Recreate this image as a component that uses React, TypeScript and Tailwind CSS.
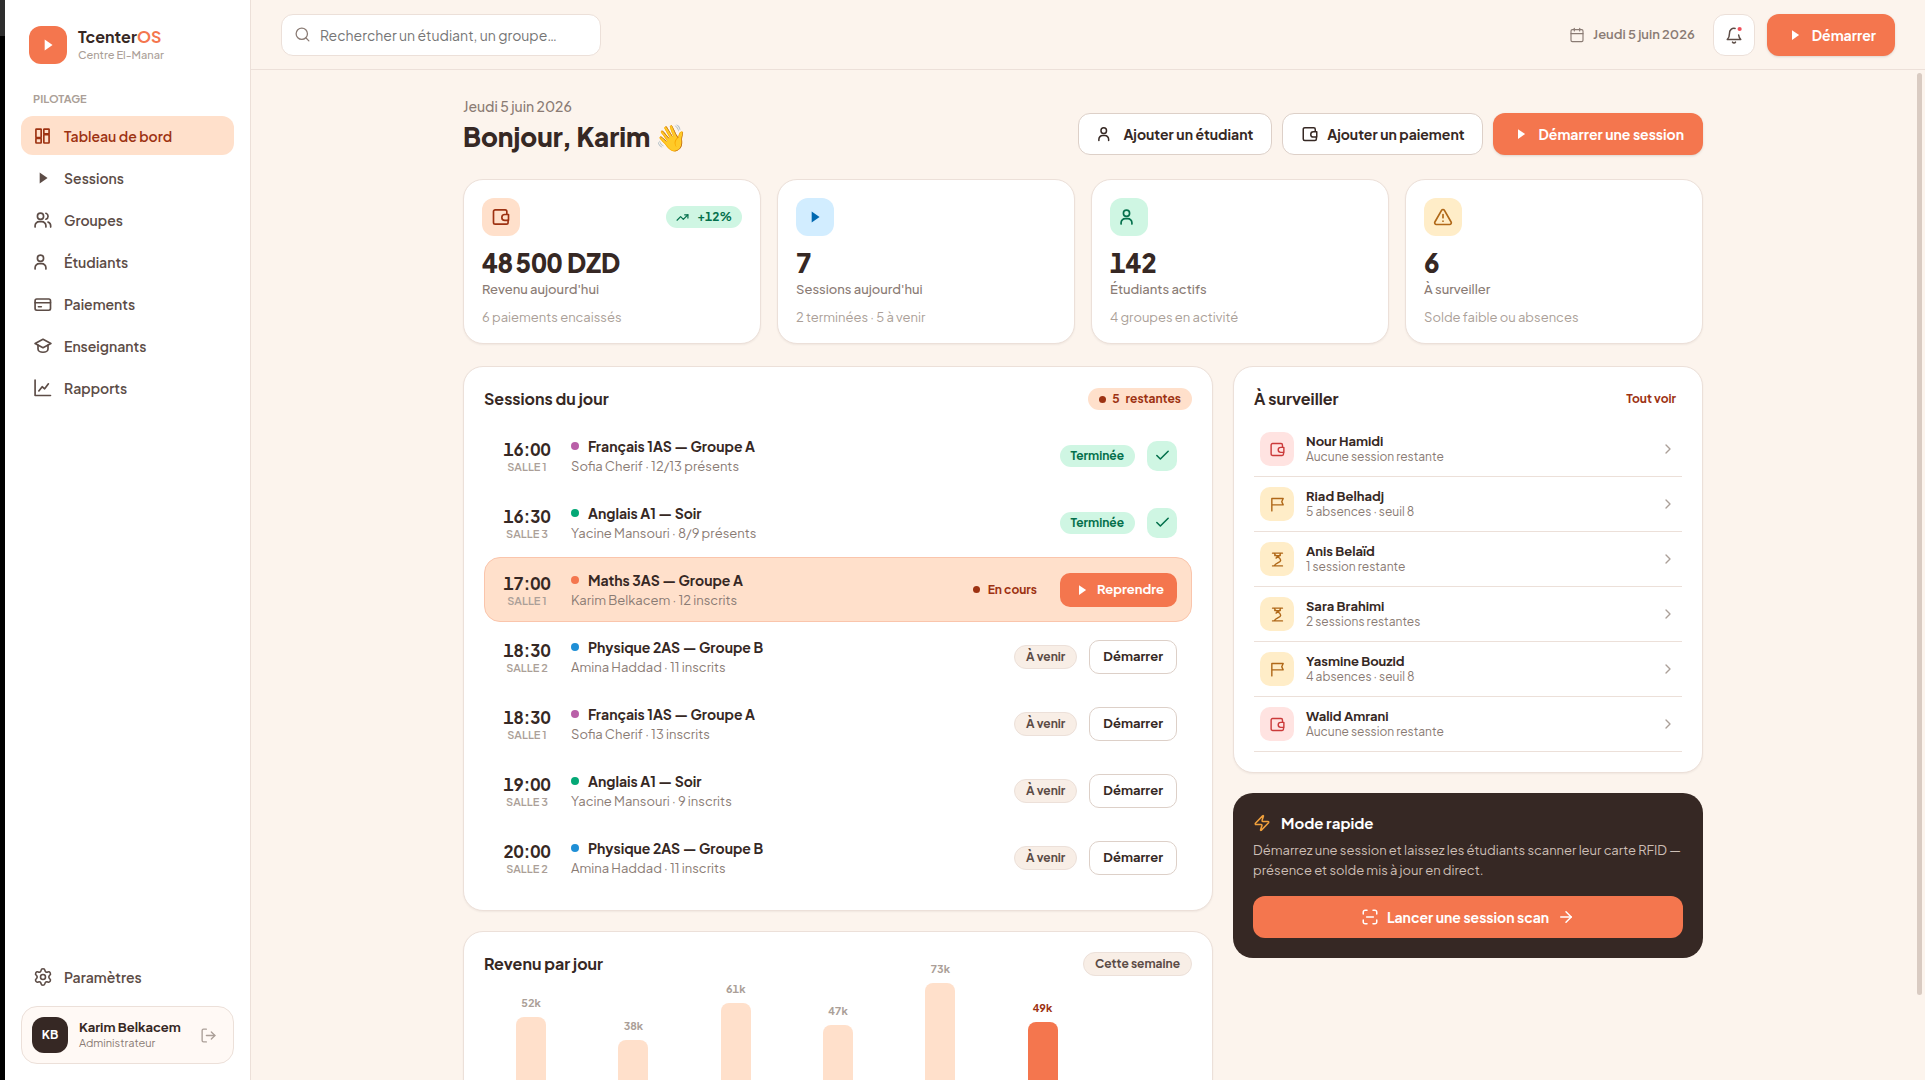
import type { ReactNode } from "react";
import {
  ArrowRight,
  Calendar,
  Check,
  ChevronRight,
  LogOut,
  Search,
  Settings,
  TrendingUp,
  TriangleAlert,
  Zap,
} from "lucide-react";

type IconName =
  | "dashboard"
  | "play"
  | "users"
  | "user"
  | "card"
  | "school"
  | "chart"
  | "wallet"
  | "flag"
  | "hourglass"
  | "bell"
  | "scan";

const shapes: Record<IconName, ReactNode> = {
  dashboard: (
    <>
      <rect x="3.5" y="3.8" width="6.3" height="10" rx="0.5" />
      <rect x="3.5" y="14.8" width="6.3" height="5.6" rx="0.5" />
      <rect x="13" y="3.8" width="6.3" height="5.6" rx="0.5" />
      <rect x="13" y="10.4" width="6.3" height="10" rx="0.5" />
    </>
  ),
  play: <path d="M8 5.5 17.5 12 8 18.5Z" fill="currentColor" stroke="none" />,
  users: (
    <>
      <circle cx="9" cy="7.5" r="3.7" />
      <path d="M2.5 20.5v-1.5a5 5 0 0 1 5-5h3a5 5 0 0 1 5 5v1.5" />
      <path d="M15.5 3.9a3.8 3.8 0 0 1 0 7.2" />
      <path d="M18 14.5c2 .8 3.2 2.5 3.2 4.5v1.5" />
    </>
  ),
  user: (
    <>
      <circle cx="9" cy="7.5" r="3.7" />
      <path d="M2.5 20.5v-1.5a5 5 0 0 1 5-5h3a5 5 0 0 1 5 5v1.5" />
    </>
  ),
  card: (
    <>
      <rect x="2.5" y="6" width="18.5" height="13.5" rx="2" />
      <path d="M2.5 10.5H21M6.5 15.3h3.5" />
    </>
  ),
  school: (
    <>
      <path d="M12 4 2.5 9 12 14l9.5-5Z" />
      <path d="M6 11v4.5c0 2.2 2.7 4 6 4s6-1.8 6-4V11" />
    </>
  ),
  chart: (
    <>
      <path d="M2.5 2.5v18.5h18.5" />
      <path d="m7 15.5 4-5 3 2.5 4.5-6" />
    </>
  ),
  wallet: (
    <>
      <path d="M19 8V5.5a2 2 0 0 0-2-2H5a2 2 0 0 0-2 2v13a2 2 0 0 0 2 2h13.5a2 2 0 0 0 2-2V16" />
      <path d="M21 9h-4.5a3.5 3.5 0 0 0 0 7H21Z" />
    </>
  ),
  flag: <path d="M4 21V3.5h16l-2 4.5 2 4.5H4" />,
  hourglass: (
    <path d="M5 3h14M5 21h14M7.5 3c0 4.500 9 5.500 9 10 0 3.500-8 4-9 8M16.500 3c0 3.500-4 5-6.500 7M8 6.500h8" />
  ),
  bell: (
    <>
      <path d="M13.5 3.2A6 6 0 0 0 6 9.5c0 4-1 6.500-3 8.500h18c-1.500-1.500-2.500-3.500-2.800-6" />
      <path d="M10 21.5a2.300 2.300 0 0 0 4 0" />
      <circle cx="19.5" cy="4" r="2.8" fill="#f04e5a" stroke="none" />
    </>
  ),
  scan: (
    <path d="M3 8V5.5A2.5 2.5 0 0 1 5.5 3H8M16 3h2.5A2.5 2.5 0 0 1 21 5.5V8M21 16v2.5a2.500 2.500 0 0 1-2.500 2.500H16M8 21H5.500A2.500 2.500 0 0 1 3 18.500V16M7.500 12h9" />
  ),
};

function Icon({ name, size = 20 }: { name: IconName; size?: number }) {
  return (
    <svg
      width={size}
      height={size}
      viewBox="0 0 24 24"
      fill="none"
      stroke="currentColor"
      strokeWidth={2}
      strokeLinecap="round"
      strokeLinejoin="round"
      className="shrink-0"
      aria-hidden="true"
    >
      {shapes[name]}
    </svg>
  );
}

const nav: { label: string; icon: IconName }[] = [
  { label: "Tableau de bord", icon: "dashboard" },
  { label: "Sessions", icon: "play" },
  { label: "Groupes", icon: "users" },
  { label: "Étudiants", icon: "user" },
  { label: "Paiements", icon: "card" },
  { label: "Enseignants", icon: "school" },
  { label: "Rapports", icon: "chart" },
];

const stats = [
  {
    icon: <Icon name="wallet" />,
    tone: "bg-[#ffe0cb] text-[#9d3212]",
    value: "48\u202f500 DZD",
    label: "Revenu aujourd'hui",
    sub: "6 paiements encaissés",
    trend: "+12%",
  },
  {
    icon: <Icon name="play" />,
    tone: "bg-[#d2edff] text-[#0068b0]",
    value: "7",
    label: "Sessions aujourd'hui",
    sub: "2 terminées · 5 à venir",
  },
  {
    icon: <Icon name="user" />,
    tone: "bg-[#cff6e3] text-[#04704c]",
    value: "142",
    label: "Étudiants actifs",
    sub: "4 groupes en activité",
  },
  {
    icon: <TriangleAlert size={20} strokeWidth={2} />,
    tone: "bg-[#ffedc8] text-[#b06818]",
    value: "6",
    label: "À surveiller",
    sub: "Solde faible ou absences",
  },
];

type Session = {
  time: string;
  room: string;
  name: string;
  meta: string;
  dot: string;
  state: "done" | "live" | "next";
};

const sessions: Session[] = [
  { time: "16:00", room: "SALLE 1", name: "Français 1AS — Groupe A", meta: "Sofia Cherif · 12/13 présents", dot: "bg-[#b95fa8]", state: "done" },
  { time: "16:30", room: "SALLE 3", name: "Anglais A1 — Soir", meta: "Yacine Mansouri · 8/9 présents", dot: "bg-[#04a876]", state: "done" },
  { time: "17:00", room: "SALLE 1", name: "Maths 3AS — Groupe A", meta: "Karim Belkacem · 12 inscrits", dot: "bg-[#f4764e]", state: "live" },
  { time: "18:30", room: "SALLE 2", name: "Physique 2AS — Groupe B", meta: "Amina Haddad · 11 inscrits", dot: "bg-[#1f8fd6]", state: "next" },
  { time: "18:30", room: "SALLE 1", name: "Français 1AS — Groupe A", meta: "Sofia Cherif · 13 inscrits", dot: "bg-[#b95fa8]", state: "next" },
  { time: "19:00", room: "SALLE 3", name: "Anglais A1 — Soir", meta: "Yacine Mansouri · 9 inscrits", dot: "bg-[#04a876]", state: "next" },
  { time: "20:00", room: "SALLE 2", name: "Physique 2AS — Groupe B", meta: "Amina Haddad · 11 inscrits", dot: "bg-[#1f8fd6]", state: "next" },
];

const RED = "bg-[#ffe3e1] text-[#cb3a3a]";
const AMBER = "bg-[#ffedc8] text-[#b06818]";

const alerts: { name: string; note: string; icon: IconName; tone: string }[] = [
  { name: "Nour Hamidi", note: "Aucune session restante", icon: "wallet", tone: RED },
  { name: "Riad Belhadj", note: "5 absences · seuil 8", icon: "flag", tone: AMBER },
  { name: "Anis Belaïd", note: "1 session restante", icon: "hourglass", tone: AMBER },
  { name: "Sara Brahimi", note: "2 sessions restantes", icon: "hourglass", tone: AMBER },
  { name: "Yasmine Bouzid", note: "4 absences · seuil 8", icon: "flag", tone: AMBER },
  { name: "Walid Amrani", note: "Aucune session restante", icon: "wallet", tone: RED },
];

const revenue = [52, 38, 61, 47, 73, 49, 0];
const today = 5;

const primaryBtn =
  "flex h-[42px] items-center gap-2 rounded-xl bg-[#f4764e] px-[19px] text-sm font-bold text-white shadow-sm hover:bg-[#e8663d]";
const outlineBtn =
  "flex h-[42px] items-center gap-2 rounded-xl border border-[#ddd0c8] bg-white px-[18px] text-sm font-bold hover:bg-[#fff9f5]";
const card = "rounded-[20px] border border-[#ece0d9] bg-white shadow-[0_1px_2px_rgba(54,40,36,0.06)]";
const neutralBadge =
  "rounded-full border border-[#ece0d9] bg-[#f8eee6] px-[11px] text-xs leading-[22px] font-bold text-[#5c4c46]";

function Sidebar() {
  return (
    <aside className="flex w-[246px] shrink-0 flex-col border-r border-[#ece0d9] bg-white p-4">
      <div className="flex items-center gap-[11px] px-2 pt-[10px]">
        <div className="flex size-[38px] items-center justify-center rounded-xl bg-[#f4764e] text-white">
          <Icon name="play" />
        </div>
        <div>
          <div className="text-base leading-5 font-bold">
            Tcenter<span className="text-[#f4764e]">OS</span>
          </div>
          <div className="text-[11px] leading-4 font-medium text-[#ab9f98]">Centre El-Manar</div>
        </div>
      </div>

      <div className="mt-7 px-3 text-[11px] leading-[14px] font-bold text-[#ab9f98]">PILOTAGE</div>
      <nav className="mt-[10px] flex flex-col gap-[3px]">
        {nav.map((n, i) => (
          <a
            key={n.label}
            href="#"
            className={`flex h-[39px] items-center gap-[11px] rounded-xl px-3 text-sm font-semibold ${
              i === 0 ? "bg-[#ffe0cb] text-[#9d3212]" : "text-[#5c4c46] hover:bg-[#fcf4ed]"
            }`}
          >
            <Icon name={n.icon} />
            {n.label}
          </a>
        ))}
      </nav>

      <a
        href="#"
        className="mt-auto flex h-[39px] items-center gap-[11px] rounded-xl px-3 text-sm font-semibold text-[#5c4c46] hover:bg-[#fcf4ed]"
      >
        <Settings size={20} strokeWidth={1.9} />
        Paramètres
      </a>
      <div className="mt-[10px] flex items-center gap-[11px] rounded-2xl border border-[#ece0d9] bg-[#fff9f5] p-[10px]">
        <div className="flex size-9 items-center justify-center rounded-xl bg-[#362824] text-xs font-bold text-white">KB</div>
        <div className="min-w-0 flex-1">
          <div className="text-[13px] leading-4 font-bold whitespace-nowrap">Karim Belkacem</div>
          <div className="text-[11px] leading-4 text-[#8a7b74]">Administrateur</div>
        </div>
        <button aria-label="Se déconnecter" className="px-[6px] text-[#ab9f98]">
          <LogOut size={17} strokeWidth={1.9} />
        </button>
      </div>
    </aside>
  );
}

function TopBar() {
  return (
    <header className="flex h-[70px] shrink-0 items-center justify-between border-b border-[#ece0d9] px-[30px]">
      <label className="flex h-[42px] w-[320px] items-center gap-[9px] rounded-xl border border-[#ece0d9] bg-white px-3">
        <Search size={17} strokeWidth={1.8} className="text-[#8a7b74]" />
        <input
          type="search"
          aria-label="Rechercher"
          placeholder="Rechercher un étudiant, un groupe…"
          className="min-w-0 flex-1 bg-transparent text-sm outline-none placeholder:text-[#757575]"
        />
      </label>
      <div className="flex items-center gap-3">
        <div className="flex items-center gap-2 pr-[6px] text-[13px] font-semibold text-[#8a7b74]">
          <Calendar size={16} strokeWidth={1.7} />
          Jeudi 5 juin 2026
        </div>
        <button
          aria-label="Notifications"
          className="flex size-[42px] items-center justify-center rounded-xl border border-[#ece0d9] bg-white text-[#5c4c46]"
        >
          <Icon name="bell" size={18} />
        </button>
        <button className={primaryBtn}>
          <Icon name="play" size={18} />
          Démarrer
        </button>
      </div>
    </header>
  );
}

function SessionRow({ s }: { s: Session }) {
  const live = s.state === "live";
  return (
    <li
      className={`flex h-[65px] items-center gap-4 rounded-2xl border px-[14px] ${
        live ? "border-[#fac5ac] bg-[#ffe0cb]" : "border-transparent"
      }`}
    >
      <div className="w-14 text-center">
        <div className="text-[17px] leading-[22px] font-bold tabular-nums">{s.time}</div>
        <div className="text-[11px] leading-[14px] font-semibold text-[#ab9f98]">{s.room}</div>
      </div>
      <div className="min-w-0 flex-1">
        <div className="flex items-center gap-[9px] text-sm leading-5 font-bold">
          <span className={`size-2 rounded-full ${s.dot}`} />
          {s.name}
        </div>
        <div className="text-[13px] leading-5 text-[#8a7b74]">{s.meta}</div>
      </div>
      <div className="flex items-center gap-3">
        {s.state === "done" && (
          <>
            <span className="rounded-full bg-[#cff6e3] px-[11px] text-xs leading-[22px] font-bold text-[#04704c]">Terminée</span>
            <span className="flex size-[30px] items-center justify-center rounded-[10px] bg-[#cff6e3] text-[#04704c]">
              <Check size={17} strokeWidth={2.2} />
            </span>
          </>
        )}
        {live && (
          <>
            <span className="flex items-center gap-2 px-[11px] text-xs font-bold text-[#9d3212]">
              <span className="size-[7px] rounded-full bg-[#9d3212]" />
              En cours
            </span>
            <button className="flex h-[34px] items-center gap-[6px] rounded-[10px] bg-[#f4764e] px-[13px] text-[13px] font-bold text-white">
              <Icon name="play" size={18} />
              Reprendre
            </button>
          </>
        )}
        {s.state === "next" && (
          <>
            <span className={neutralBadge}>À venir</span>
            <button className="h-[34px] rounded-[10px] border border-[#ddd0c8] bg-white px-[13px] text-[13px] font-bold">
              Démarrer
            </button>
          </>
        )}
      </div>
    </li>
  );
}

function RevenueCard() {
  return (
    <section className={`${card} p-5`}>
      <div className="flex h-6 items-center justify-between">
        <h2 className="text-base font-bold">Revenu par jour</h2>
        <span className={neutralBadge}>Cette semaine</span>
      </div>
      {/* the tallest bar's label is allowed to rise next to the heading */}
      <div className="mt-4 flex h-[109px] items-end gap-2">
        {revenue.map((v, i) => (
          <div key={i} className="flex flex-1 flex-col items-center gap-[6px]">
            {v > 0 && (
              <>
                <span
                  className={`text-[11px] leading-4 font-bold tabular-nums ${i === today ? "text-[#9d3212]" : "text-[#ab9f98]"}`}
                >
                  {v}k
                </span>
                <div
                  className={`w-[30px] rounded-t-lg ${i === today ? "bg-[#f4764e]" : "bg-[#ffe0cb]"}`}
                  style={{ height: Math.round(v * 1.61) }}
                />
              </>
            )}
          </div>
        ))}
      </div>
    </section>
  );
}

export default function App() {
  return (
    <div className="flex h-screen overflow-hidden bg-[#fcf4ed] font-['Plus_Jakarta_Sans',Inter,sans-serif] text-[#362824]">
      <div className="w-[5px] shrink-0 bg-black">
        <div className="h-9 bg-[#2e2e2e]" />
      </div>
      <Sidebar />
      <div className="relative flex min-w-0 flex-1 flex-col">
        <TopBar />
        <main className="flex-1 overflow-y-auto pr-[10px] [scrollbar-width:none]">
          <div className="mx-auto max-w-[1240px] pt-[25px] pb-10">
            <div className="flex items-end justify-between">
              <div>
                <p className="text-sm leading-[22px] font-medium text-[#8a7b74]">Jeudi 5 juin 2026</p>
                <h1 className="text-[26px] leading-10 font-extrabold">Bonjour, Karim 👋</h1>
              </div>
              <div className="flex gap-[10px] pb-[2px]">
                <button className={outlineBtn}>
                  <Icon name="user" size={18} />
                  Ajouter un étudiant
                </button>
                <button className={outlineBtn}>
                  <Icon name="wallet" size={18} />
                  Ajouter un paiement
                </button>
                <button className={primaryBtn}>
                  <Icon name="play" size={18} />
                  Démarrer une session
                </button>
              </div>
            </div>

            <div className="mt-[22px] grid grid-cols-4 gap-4">
              {stats.map((s) => (
                <section key={s.label} className={`${card} px-[18px] pt-[18px] pb-4`}>
                  <div className="flex items-center justify-between">
                    <div className={`flex size-[38px] items-center justify-center rounded-xl ${s.tone}`}>{s.icon}</div>
                    {s.trend && (
                      <span className="flex h-[22px] items-center gap-2 rounded-full bg-[#cff6e3] px-[10px] text-xs font-bold text-[#04704c] tabular-nums">
                        <TrendingUp size={13} strokeWidth={2.2} />
                        {s.trend}
                      </span>
                    )}
                  </div>
                  <div className="mt-[10px] text-[26px] leading-[33px] font-extrabold tabular-nums">{s.value}</div>
                  <div className="text-[13px] leading-5 font-medium text-[#8a7b74]">{s.label}</div>
                  <div className="mt-2 text-[13px] leading-5 text-[#ab9f98]">{s.sub}</div>
                </section>
              ))}
            </div>

            <div className="mt-[22px] grid grid-cols-[75fr_47fr] items-start gap-5">
              <div className="flex flex-col gap-5">
                <section className={`${card} p-5`}>
                  <div className="flex h-6 items-center justify-between">
                    <h2 className="text-base font-bold">Sessions du jour</h2>
                    <span className="flex h-[22px] items-center gap-[6px] rounded-full bg-[#ffe0cb] px-[11px] text-xs font-bold text-[#9d3212]">
                      <span className="size-[7px] rounded-full bg-[#9d3212]" />
                      <span>5</span>
                      <span>restantes</span>
                    </span>
                  </div>
                  <ul className="mt-3 flex flex-col gap-[2px]">
                    {sessions.map((s, i) => (
                      <SessionRow key={i} s={s} />
                    ))}
                  </ul>
                </section>
                <RevenueCard />
              </div>

              <div className="flex flex-col gap-5">
                <section className={`${card} p-5`}>
                  <div className="flex h-6 items-center justify-between">
                    <h2 className="text-base font-bold">À surveiller</h2>
                    <a href="#" className="px-[6px] text-xs font-bold text-[#9d3212]">
                      Tout voir
                    </a>
                  </div>
                  <ul className="mt-[11px]">
                    {alerts.map((a) => (
                      <li key={a.name} className="flex items-center gap-3 border-b border-[#ece0d9] px-[6px] py-[10px]">
                        <span className={`flex size-[34px] items-center justify-center rounded-[10px] ${a.tone}`}>
                          <Icon name={a.icon} size={17} />
                        </span>
                        <div className="flex-1">
                          <div className="text-[13px] leading-4 font-bold">{a.name}</div>
                          <div className="text-xs leading-4 text-[#8a7b74]">{a.note}</div>
                        </div>
                        <ChevronRight size={16} strokeWidth={2} className="text-[#ab9f98]" />
                      </li>
                    ))}
                  </ul>
                </section>

                <section className="rounded-[20px] bg-[#362824] p-5 text-white">
                  <div className="flex h-5 items-center gap-[10px]">
                    <Zap size={18} strokeWidth={2} className="text-[#f0a03c]" />
                    <h2 className="text-[15px] font-bold">Mode rapide</h2>
                  </div>
                  <p className="mt-[7px] text-[13px] leading-5 text-[#cdbfb6]">
                    Démarrez une session et laissez les étudiants scanner leur carte RFID — présence et solde mis à jour en direct.
                  </p>
                  <button className="mt-4 flex h-[42px] w-full items-center justify-center gap-2 rounded-xl bg-[#f4764e] text-sm font-bold">
                    <Icon name="scan" size={18} />
                    Lancer une session scan
                    <ArrowRight size={18} strokeWidth={2} />
                  </button>
                </section>
              </div>
            </div>
          </div>
        </main>
        {/* scroll thumb */}
        <div className="absolute top-[73px] right-[3px] bottom-[85px] w-[5px] rounded-full bg-[#d9cbc2]" />
      </div>
    </div>
  );
}
